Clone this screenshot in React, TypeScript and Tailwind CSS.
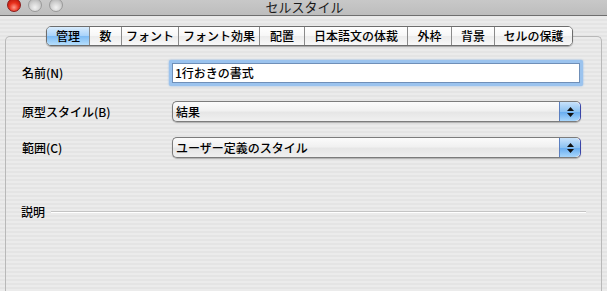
import React from "react";

const jp = { fontFamily: '"Noto Sans CJK JP", "Liberation Sans", sans-serif' };

const tabs: { label: string; w: number }[] = [
  { label: "管理", w: 43 },
  { label: "数", w: 32 },
  { label: "フォント", w: 57 },
  { label: "フォント効果", w: 81 },
  { label: "配置", w: 45 },
  { label: "日本語文の体裁", w: 103 },
  { label: "外枠", w: 44 },
  { label: "背景", w: 43 },
  { label: "セルの保護", w: 78 },
];

function Light({ red }: { red?: boolean }) {
  return (
    <div
      className={
        red
          ? "w-[14px] h-[14px] rounded-full border border-[#8a1a1a] bg-[radial-gradient(circle_at_50%_70%,#ff9a8a_0%,#e8301c_45%,#a90f06_100%)]"
          : "w-[14px] h-[14px] rounded-full border border-[#9a9a9a] bg-[radial-gradient(circle_at_50%_70%,#f2f2f2_0%,#d0d0d0_50%,#a8a8a8_100%)]"
      }
    />
  );
}

function Stepper() {
  return (
    <div className="w-[21px] h-full flex flex-col items-center justify-center gap-[2px] rounded-r-[5px] border-l border-[#5a7fc0] bg-[linear-gradient(180deg,#c8e2fb_0%,#8cc2f2_50%,#6aaef0_55%,#a8d6fb_100%)]">
      <svg width="7" height="4" viewBox="0 0 7 4"><path d="M3.5 0L7 4H0z" fill="#111" /></svg>
      <svg width="7" height="4" viewBox="0 0 7 4"><path d="M0 0H7L3.5 4z" fill="#111" /></svg>
    </div>
  );
}

function Popup({ text }: { text: string }) {
  return (
    <div className="ml-[3px] w-[409px] h-[21px] flex rounded-[5px] border border-[#7c7c7c] border-r-[#3b45a8] shadow-[0_1px_1px_rgba(0,0,0,0.25)] overflow-hidden bg-[linear-gradient(180deg,#fbfbfb_0%,#f1f1f1_45%,#e6e6e6_55%,#f0f0f0_100%)]">
      <div className="flex-1 flex items-center pl-[3px] text-[12px] font-medium text-black leading-none" style={jp}>
        {text}
      </div>
      <Stepper />
    </div>
  );
}

export default function App() {
  return (
    <div className="w-[607px] h-[291px] overflow-hidden flex flex-col" style={jp}>
      {/* title bar */}
      <div className="h-[16px] shrink-0 relative flex items-end border-b border-[#6f6f6f] bg-[linear-gradient(180deg,#c8c8c8_0%,#bdbdbd_100%)]">
        <div className="absolute left-[7px] top-[-2px] flex gap-[7px]">
          <Light red />
          <Light />
          <Light />
        </div>
        <div className="w-full text-center text-[13px] leading-none text-[#1a1a1a] mb-[2px] pl-[2px]">セルスタイル</div>
      </div>

      {/* body */}
      <div className="flex-1 flex flex-col px-[5px] pt-[9px] border-t border-[#e9e9e9] bg-[repeating-linear-gradient(180deg,#ebebeb_0px,#ebebeb_2px,#e4e4e4_2px,#e4e4e4_4px)]">
        {/* tab strip */}
        <div className="relative z-10 flex justify-start pl-[41px] h-[20px]">
          <div className="flex h-[20px] rounded-[5px] border border-[#6d6d6d] shadow-[0_1px_1px_rgba(0,0,0,0.3)] overflow-hidden">
            {tabs.map((t, i) => (
              <div
                key={t.label}
                style={{ width: t.w - (i === 0 ? 1 : 0) }}
                className={
                  (i === 0
                    ? "bg-[linear-gradient(180deg,#d9ecfd_0%,#a9d3fa_48%,#7fbcf4_52%,#b5defc_100%)] "
                    : "border-l border-[#8a8a8a] bg-[linear-gradient(180deg,#ffffff_0%,#f7f7f7_48%,#ececec_52%,#f8f8f8_100%)] ") +
                  "flex items-center justify-center text-[12px] font-medium leading-none text-black"
                }
              >
                {t.label}
              </div>
            ))}
          </div>
        </div>

        {/* panel */}
        <div className="-mt-[10px] flex-1 flex flex-col rounded-t-[5px] border border-[#b8b8b8] border-b-0 pl-[16px] pt-[23px]">
          <div className="flex items-center h-[26px]">
            <div className="w-[147px] text-[12px] font-medium leading-none text-black">名前(N)</div>
            <div className="w-[414px] h-[26px] rounded-[2px] p-[3px] bg-[#9bc3ee] shadow-[0_0_2px_#7eaee6]">
              <div className="w-full h-full bg-white border border-[#6f8fb8] flex items-center pl-[2px] text-[12px] font-medium leading-none text-black">
                1行おきの書式
              </div>
            </div>
          </div>

          <div className="flex items-center h-[21px] mt-[15px]">
            <div className="w-[147px] text-[12px] font-medium leading-none text-black">原型スタイル(B)</div>
            <Popup text="結果" />
          </div>

          <div className="flex items-center h-[21px] mt-[15px]">
            <div className="w-[147px] text-[12px] font-medium leading-none text-black">範囲(C)</div>
            <Popup text="ユーザー定義のスタイル" />
          </div>

          <div className="flex items-center mt-[47px] h-[13px] -ml-[1px] pr-[15px]">
            <div className="text-[12px] font-medium leading-none text-black">説明</div>
            <div className="flex-1 ml-[6px] h-[2px] border-t border-[#c4c4c4] border-b border-b-white" />
          </div>
        </div>
      </div>
    </div>
  );
}
